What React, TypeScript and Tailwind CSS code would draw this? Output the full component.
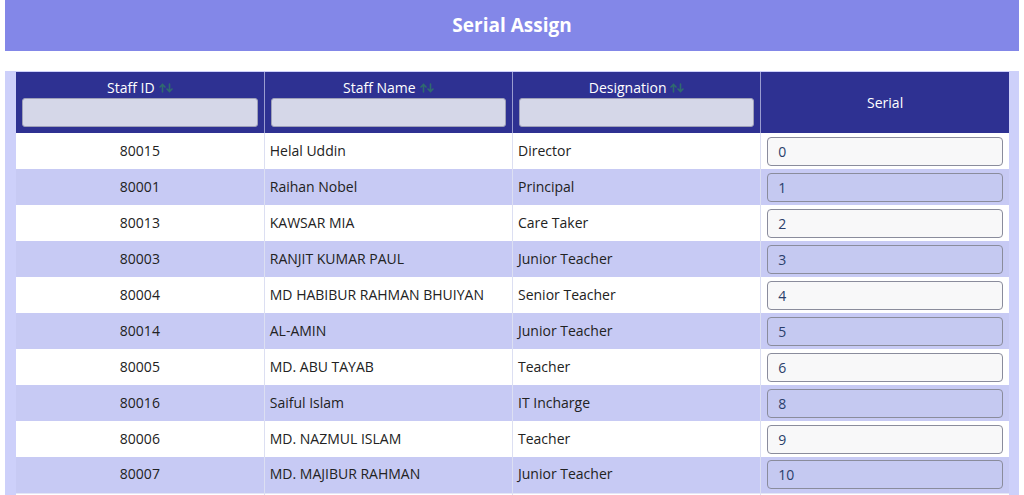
import { ChangeEvent, useState } from "react";

interface StaffRow {
  id: string;
  name: string;
  designation: string;
  serial: string;
}

const initialRows: StaffRow[] = [
  { id: "80015", name: "Helal Uddin", designation: "Director", serial: "0" },
  { id: "80001", name: "Raihan Nobel", designation: "Principal", serial: "1" },
  { id: "80013", name: "KAWSAR MIA", designation: "Care Taker", serial: "2" },
  { id: "80003", name: "RANJIT KUMAR PAUL", designation: "Junior Teacher", serial: "3" },
  { id: "80004", name: "MD HABIBUR RAHMAN BHUIYAN", designation: "Senior Teacher", serial: "4" },
  { id: "80014", name: "AL-AMIN", designation: "Junior Teacher", serial: "5" },
  { id: "80005", name: "MD. ABU TAYAB", designation: "Teacher", serial: "6" },
  { id: "80016", name: "Saiful Islam", designation: "IT Incharge", serial: "8" },
  { id: "80006", name: "MD. NAZMUL ISLAM", designation: "Teacher", serial: "9" },
  { id: "80007", name: "MD. MAJIBUR RAHMAN", designation: "Junior Teacher", serial: "10" },
];

function SortIcon() {
  return (
    <svg width="14" height="10" viewBox="0 0 14 10" className="inline-block ml-1 -mt-[2px]">
      <g stroke="#2f6a6e" strokeWidth="1.6" fill="none" strokeLinecap="round">
        <path d="M3.5 9V1.5M1 4l2.5-2.5L6 4" />
        <path d="M10.5 1v7.5M8 6l2.5 2.5L13 6" />
      </g>
    </svg>
  );
}

function FilterHeader({ label }: { label: string }) {
  return (
    <th className="border-r border-[#9a9cd0] px-[6px] pt-[7px] pb-[5px] align-top font-normal">
      <div className="leading-[18px]">
        {label}
        <SortIcon />
      </div>
      <input
        type="text"
        className="mt-[1px] block w-full h-[29px] rounded-[3px] border border-[#9ea0b8] bg-[#d5d7e8] outline-none"
      />
    </th>
  );
}

export default function App() {
  const [rows, setRows] = useState<StaffRow[]>(initialRows);

  const updateSerial = (index: number) => (e: ChangeEvent<HTMLInputElement>) => {
    const next = [...rows];
    next[index] = { ...next[index], serial: e.target.value };
    setRows(next);
  };

  return (
    <div className="w-[1024px] h-[495px] overflow-hidden bg-white text-[14px] text-[#222] font-['Open_Sans',sans-serif]">
      {/* Title bar */}
      <div className="mx-[5px] h-[51px] bg-[#8387e8] flex items-center justify-center">
        <h1 className="text-white text-[19px] font-bold -mt-[1px]">Serial Assign</h1>
      </div>

      <div className="mx-[5px] mt-[20px] h-[430px] bg-[#cdd0fa] pl-[11px] pt-[1px]">
        <table className="w-[993px] table-fixed border-collapse">
          <thead>
            <tr className="bg-[#2e3192] text-white h-[61px]">
              <FilterHeader label="Staff ID" />
              <FilterHeader label="Staff Name" />
              <FilterHeader label="Designation" />
              <th className="font-normal align-middle">Serial</th>
            </tr>
          </thead>
          <tbody>
            {rows.map((row, i) => {
              const striped = i % 2 === 1;
              return (
                <tr key={row.id} className={`h-[36px] ${striped ? "bg-[#c7caf4]" : "bg-white"}`}>
                  <td className="border-r border-[#dcdff2] text-center pb-[2px]">{row.id}</td>
                  <td className="border-r border-[#dcdff2] px-[5px] pb-[2px]">{row.name}</td>
                  <td className="border-r border-[#dcdff2] px-[5px] pb-[2px]">{row.designation}</td>
                  <td className="px-[6px]">
                    <input
                      type="text"
                      value={row.serial}
                      onChange={updateSerial(i)}
                      className={`block w-full h-[29px] rounded-[4px] border border-[#8a8c9c] px-[10px] text-[#2b3f6b] outline-none ${
                        striped ? "bg-[#c5c9f1]" : "bg-[#f8f8f9]"
                      }`}
                    />
                  </td>
                </tr>
              );
            })}
            <tr className="h-[36px] bg-white border-t border-[#e4e6f5]">
              <td className="border-r border-[#dcdff2]" />
              <td className="border-r border-[#dcdff2]" />
              <td className="border-r border-[#dcdff2]" />
              <td />
            </tr>
          </tbody>
        </table>
      </div>
    </div>
  );
}
